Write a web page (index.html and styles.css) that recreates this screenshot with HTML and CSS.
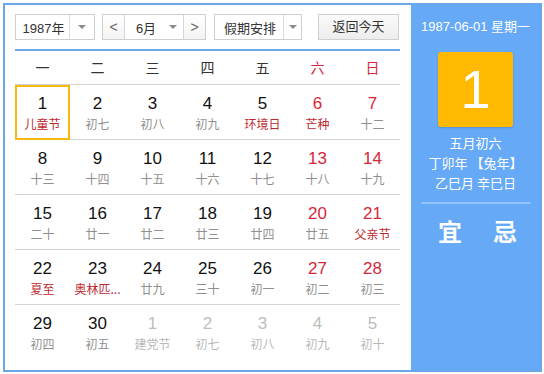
FILE: index.html
```html
<!DOCTYPE html>
<html lang="zh">
<head>
<meta charset="utf-8">
<title>万年历</title>
<link rel="stylesheet" href="styles.css">
</head>
<body>
<div class="cal">
  <div class="main">
    <div class="toolbar">
      <div class="sel year"><span class="sel-text">1987年</span><span class="sel-arrow"></span></div>
      <div class="month-group">
        <span class="nav">&lt;</span>
        <div class="month"><span class="sel-text">6月</span><span class="sel-arrow small"></span></div>
        <span class="nav">&gt;</span>
      </div>
      <div class="sel holiday"><span class="sel-text">假期安排</span><span class="sel-arrow narrow"></span></div>
      <div class="btn-today">返回今天</div>
    </div>
    <div class="week">
      <span>一</span><span>二</span><span>三</span><span>四</span><span>五</span><span class="we">六</span><span class="we">日</span>
    </div>
    <div class="grid">
      <div class="cell sel-day"><b>1</b><i class="fest">儿童节</i></div>
      <div class="cell"><b>2</b><i>初七</i></div>
      <div class="cell"><b>3</b><i>初八</i></div>
      <div class="cell"><b>4</b><i>初九</i></div>
      <div class="cell"><b>5</b><i class="fest">环境日</i></div>
      <div class="cell we"><b>6</b><i class="fest">芒种</i></div>
      <div class="cell we"><b>7</b><i>十二</i></div>

      <div class="cell"><b>8</b><i>十三</i></div>
      <div class="cell"><b>9</b><i>十四</i></div>
      <div class="cell"><b>10</b><i>十五</i></div>
      <div class="cell"><b>11</b><i>十六</i></div>
      <div class="cell"><b>12</b><i>十七</i></div>
      <div class="cell we"><b>13</b><i>十八</i></div>
      <div class="cell we"><b>14</b><i>十九</i></div>

      <div class="cell"><b>15</b><i>二十</i></div>
      <div class="cell"><b>16</b><i>廿一</i></div>
      <div class="cell"><b>17</b><i>廿二</i></div>
      <div class="cell"><b>18</b><i>廿三</i></div>
      <div class="cell"><b>19</b><i>廿四</i></div>
      <div class="cell we"><b>20</b><i>廿五</i></div>
      <div class="cell we"><b>21</b><i class="fest">父亲节</i></div>

      <div class="cell"><b>22</b><i class="fest">夏至</i></div>
      <div class="cell"><b>23</b><i class="fest">奥林匹...</i></div>
      <div class="cell"><b>24</b><i>廿九</i></div>
      <div class="cell"><b>25</b><i>三十</i></div>
      <div class="cell"><b>26</b><i>初一</i></div>
      <div class="cell we"><b>27</b><i>初二</i></div>
      <div class="cell we"><b>28</b><i>初三</i></div>

      <div class="cell last"><b>29</b><i>初四</i></div>
      <div class="cell last"><b>30</b><i>初五</i></div>
      <div class="cell last other"><b>1</b><i>建党节</i></div>
      <div class="cell last other"><b>2</b><i>初七</i></div>
      <div class="cell last other"><b>3</b><i>初八</i></div>
      <div class="cell last other"><b>4</b><i>初九</i></div>
      <div class="cell last other"><b>5</b><i>初十</i></div>
    </div>
  </div>
  <div class="side">
    <div class="side-date">1987-06-01 星期一</div>
    <div class="big-day">1</div>
    <div class="side-lunar">
      <div>五月初六</div>
      <div>丁卯年 【兔年】</div>
      <div>乙巳月 辛巳日</div>
    </div>
    <div class="side-line"></div>
    <div class="yiji"><span>宜</span><span>忌</span></div>
  </div>
</div>
</body>
</html>
```

FILE: styles.css
```css
html, body {
  margin: 0;
  padding: 0;
  background: #fff;
}
body {
  font-family: "Liberation Sans", Arial, "Noto Sans CJK SC", sans-serif;
  color: #333;
}
.cal {
  margin: 3px;
  width: 535px;
  height: 365px;
  border: 2px solid #6aa6e8;
  display: flex;
}
.main {
  width: 385px;
  padding: 9px 11px 0 10px;
}
.toolbar {
  display: flex;
  height: 26px;
  font-size: 13px;
  font-family: "Liberation Sans", Arial, "Noto Sans CJK SC", sans-serif;
}
.sel {
  display: flex;
  align-items: center;
  border: 1px solid #cfcfcf;
  background: #fff;
  box-sizing: border-box;
  height: 26px;
}
.sel-text {
  flex: 1;
  text-align: center;
  color: #333;
}
.sel-arrow {
  width: 24px;
  height: 24px;
  border-left: 1px solid #dcdcdc;
  position: relative;
}
.sel-arrow::after {
  content: "";
  position: absolute;
  left: 8px;
  top: 10px;
  border-left: 4px solid transparent;
  border-right: 4px solid transparent;
  border-top: 4px solid #8a8a8a;
}
.sel-arrow.small {
  border-left: none;
  width: 22px;
}
.sel-arrow.narrow {
  width: 17px;
}
.sel-arrow.narrow::after {
  left: 5px;
}
.year {
  width: 80px;
}
.year .sel-text {
  padding-left: 2px;
}
.month-group {
  margin-left: 7px;
  width: 104px;
  height: 26px;
  box-sizing: border-box;
  border: 1px solid #cfcfcf;
  display: flex;
  background: #fff;
}
.nav {
  width: 21px;
  text-align: center;
  line-height: 24px;
  color: #666;
  font-size: 14px;
  background: linear-gradient(#fff, #f3f3f3);
}
.nav:first-child {
  border-right: 1px solid #d6d6d6;
}
.nav:last-child {
  border-left: 1px solid #d6d6d6;
}
.month {
  flex: 1;
  display: flex;
  align-items: center;
}
.month .sel-text {
  padding-left: 6px;
}
.holiday {
  margin-left: 8px;
  width: 88px;
}
.holiday .sel-text {
  font-size: 13px;
  padding-left: 2px;
}
.btn-today {
  margin-left: 16px;
  width: 81px;
  height: 26px;
  box-sizing: border-box;
  border: 1px solid #d0d0d0;
  background: linear-gradient(#fafafa, #ededed);
  text-align: center;
  line-height: 24px;
  color: #333;
}
.week {
  margin-top: 9px;
  border-top: 2px solid #6aa6e8;
  display: grid;
  grid-template-columns: repeat(7, 55px);
  height: 33px;
  border-bottom: 1px solid #d4d4d4;
  font-family: "Noto Sans CJK SC", sans-serif;
  font-size: 14px;
  color: #333;
}
.week span {
  text-align: center;
  line-height: 33px;
}
.week .we {
  color: #d4283a;
}
.grid {
  display: grid;
  grid-template-columns: repeat(7, 55px);
  grid-auto-rows: 55px;
}
.cell {
  box-sizing: border-box;
  border-bottom: 1px solid #d4d4d4;
  padding-top: 9px;
  text-align: center;
  display: flex;
  flex-direction: column;
  align-items: center;
}
.cell.last {
  border-bottom: none;
}
.cell b {
  display: block;
  font-weight: normal;
  font-family: "Liberation Sans", Arial, sans-serif;
  font-size: 17px;
  line-height: 20px;
  color: #111;
}
.cell i {
  display: block;
  font-style: normal;
  font-family: "Noto Sans CJK SC", sans-serif;
  font-size: 12px;
  line-height: 20px;
  color: #8f8f8f;
  white-space: nowrap;
}
.cell.we b {
  color: #d4283a;
}
.cell i.fest {
  color: #bd2830;
}
.cell.other b {
  color: #bdbdbd;
}
.cell.other i {
  color: #b8b8b8;
}
.cell.sel-day {
  border: 2px solid #f5b90f;
  padding-top: 7px;
}
.side {
  flex: 1;
  background: #65a9f7;
  color: #fff;
  display: flex;
  flex-direction: column;
  align-items: center;
  padding-top: 12px;
}
.side-date {
  font-size: 13px;
  line-height: 20px;
  font-family: "Liberation Sans", Arial, "Noto Sans CJK SC", sans-serif;
}
.big-day {
  margin-top: 15px;
  width: 75px;
  height: 75px;
  background: #ffb900;
  border-radius: 3px;
  box-shadow: 0 1px 2px rgba(0, 0, 0, 0.15);
  font-family: "Liberation Sans", Arial, sans-serif;
  font-size: 54px;
  line-height: 75px;
  text-align: center;
}
.side-lunar {
  margin-top: 6px;
  font-family: "Noto Sans CJK SC", sans-serif;
  font-size: 13px;
  line-height: 20px;
  text-align: center;
}
.side-line {
  margin-top: 9px;
  width: 110px;
  height: 2px;
  background: rgba(255, 255, 255, 0.3);
}
.yiji {
  margin-top: 13px;
  display: flex;
  gap: 31px;
  padding-left: 4px;
  font-family: "Noto Sans CJK SC", sans-serif;
  font-size: 24px;
  font-weight: bold;
  line-height: 28px;
}
```
